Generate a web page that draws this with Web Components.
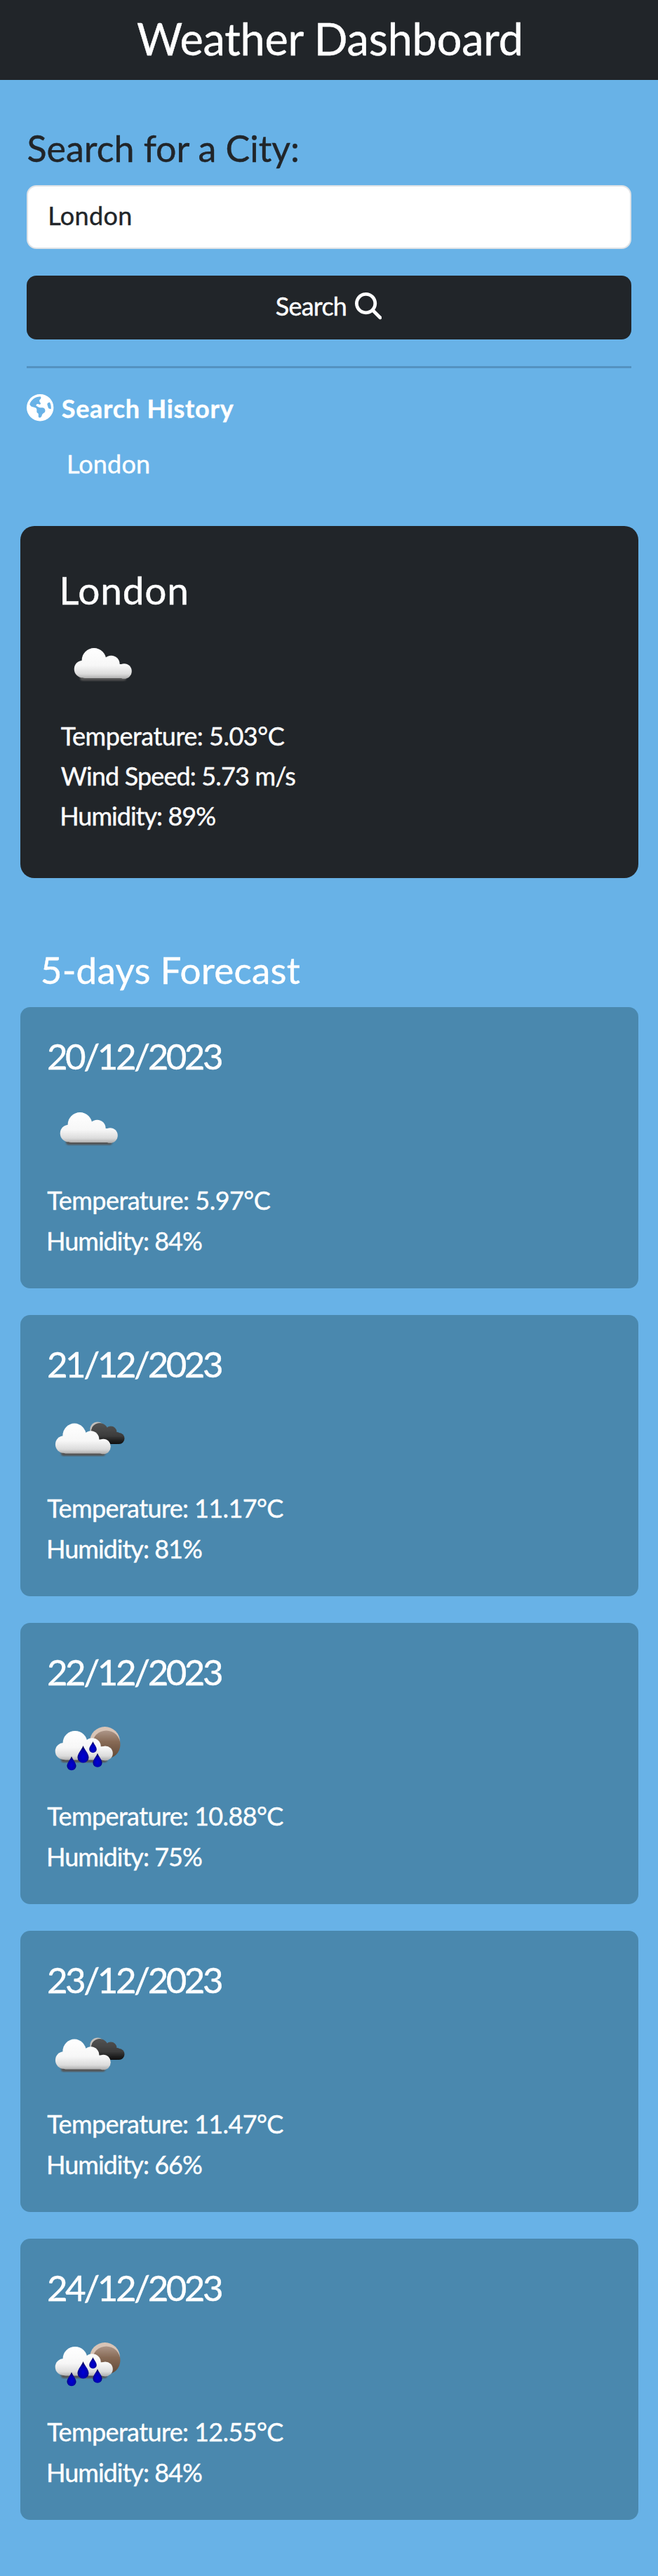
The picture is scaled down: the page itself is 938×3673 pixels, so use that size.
<!DOCTYPE html>
<html lang="en">
<head>
<meta charset="utf-8">
<title>Weather Dashboard</title>
<style>
body{margin:0;background:#68b2e7;color:#fff;font-family:Lato,"Open Sans",sans-serif}
</style>
</head>
<body>
<weather-app></weather-app>
<script>
// A single line of text, set on a given baseline and tracked to a given ink width.
class TextLine extends HTMLElement{
  connectedCallback(){
    if(this.shadowRoot)return;
    const n=k=>parseFloat(this.getAttribute(k))||0;
    const s=n('size'),bold=this.hasAttribute('bold');
    const text=this.textContent;
    const c=TextLine.ctx||(TextLine.ctx=document.createElement('canvas').getContext('2d'));
    c.font=`${bold?'bold ':''}${s}px Lato`;
    const m=c.measureText(text);
    const ink=m.actualBoundingBoxRight+m.actualBoundingBoxLeft;
    const ls=(n('w')-ink)/(text.length-1);
    this.attachShadow({mode:'open'}).innerHTML=`<style>
      :host{display:block;flex:none;white-space:nowrap;box-sizing:border-box;
        height:${n('h')}px;padding-left:${n('x')}px;
        font-size:${s}px;line-height:${2*(n('base')+.6-.387*s)}px;font-weight:${bold?700:400};
        -webkit-text-stroke:.4px currentColor}
      span{display:block;width:${n('w')}px;letter-spacing:${ls.toFixed(3)}px;text-indent:${m.actualBoundingBoxLeft.toFixed(2)}px;font-kerning:normal;font-variant-ligatures:none}
    </style><span><slot></slot></span>`;
  }
}

const cloud=(dx,dy,sx,sy)=>`<g transform="translate(${dx} ${dy}) scale(${sx} ${sy})">
  <rect x="27" y="74" width="66" height="9.5" rx="4" fill="#555" filter="url(#b)"/>
  <g fill="url(#w)" filter="url(#s)"><circle cx="31" cy="67" r="12.3"/><circle cx="47" cy="54.5" r="17.4"/><circle cx="71.5" cy="60" r="12.2"/><circle cx="90" cy="70" r="10.8"/><rect x="28" y="60" width="63" height="20" rx="6"/></g></g>`;
const drop=(x,y,k)=>`<path transform="translate(${x} ${y}) scale(${k})" d="M0-12C2-6 8-1 8 5A8 7.5 0 0 1-8 5C-8-1-2-6 0-12Z" fill="url(#d)" filter="url(#s)"/>`;
const defs=`<defs>
  <linearGradient id="w" gradientUnits="userSpaceOnUse" x1="0" y1="37" x2="0" y2="82"><stop offset="0" stop-color="#fff"/><stop offset=".55" stop-color="#f7f7f7"/><stop offset=".82" stop-color="#dcdcdc"/><stop offset="1" stop-color="#a2a2a2"/></linearGradient>
  <linearGradient id="k" gradientUnits="userSpaceOnUse" x1="0" y1="40" x2="0" y2="72"><stop offset="0" stop-color="#555"/><stop offset=".6" stop-color="#3c3c3c"/><stop offset="1" stop-color="#080808"/></linearGradient>
  <linearGradient id="m" x1="0" y1="0" x2="0" y2="1"><stop offset="0" stop-color="#ad9688"/><stop offset=".4" stop-color="#876a55"/><stop offset="1" stop-color="#5e4736"/></linearGradient>
  <radialGradient id="d" cx=".5" cy=".65" r=".6"><stop offset="0" stop-color="#0000d8"/><stop offset=".6" stop-color="#0000b0"/><stop offset="1" stop-color="#00004c"/></radialGradient>
  <filter id="b"><feGaussianBlur stdDeviation=".9"/></filter><filter id="s" x="-20%" y="-20%" width="140%" height="140%"><feGaussianBlur stdDeviation=".5"/></filter></defs>`;
const ART={
  cloud:cloud(0,0,1,1),
  broken:`<circle cx="72" cy="50" r="10.6" fill="#c4c0bc" filter="url(#s)"/>
    <g fill="url(#k)" filter="url(#s)"><circle cx="75" cy="53" r="12"/><circle cx="91" cy="54" r="8.5"/><circle cx="102.5" cy="63" r="8"/><rect x="68" y="54" width="37" height="17" rx="5"/></g>${cloud(-6,4.5,.96,1)}`,
  rain:`<circle cx="82.5" cy="56.5" r="21.5" fill="#d8c4b6" filter="url(#s)"/><circle cx="84.5" cy="60.5" r="20" fill="url(#m)" filter="url(#s)"/>${cloud(-7,5,1,.97)}
    ${drop(51.5,74,1)}${drop(65.5,64,.66)}${drop(72,82.5,.82)}${drop(35,87,.82)}`
};
class WeatherIcon extends HTMLElement{
  connectedCallback(){
    this.attachShadow({mode:'open'}).innerHTML=`<style>:host{display:block;width:120px;height:120px}svg{display:block}</style>
    <svg width="120" height="120" viewBox="0 0 120 120">${defs}${ART[this.getAttribute('kind')]}</svg>`;
  }
}

class ForecastCard extends HTMLElement{
  connectedCallback(){
    const a=k=>this.getAttribute(k);
    this.attachShadow({mode:'open'}).innerHTML=`<style>
      :host{display:block;box-sizing:border-box;height:401px;padding-left:38.3px;border-radius:14px;background:#4a88ae}</style>
      <text-line size="51" base="89" h="113.5" x="2" w="247">${a('date')}</text-line>
      <weather-icon kind="${a('kind')}"></weather-icon>
      <text-line size="36" base="56" h="57.7" x=".3" w="${a('tw')}">Temperature: ${a('temp')}°C</text-line>
      <text-line size="36" base="55.5" h="57.7" x="2" w="219">Humidity: ${a('hum')}%</text-line>`;
  }
}

class CurrentWeather extends HTMLElement{
  connectedCallback(){
    this.attachShadow({mode:'open'}).innerHTML=`<style>
      :host{display:block;box-sizing:border-box;height:502px;padding-left:58px;border-radius:20px;background:#212529}</style>
      <text-line size="55" base="112.3" h="137" x="2.5" w="177">London</text-line>
      <weather-icon kind="cloud"></weather-icon>
      <text-line size="36" base="55.5" h="57.7" w="319">Temperature: 5.03°C</text-line>
      <text-line size="36" base="55.2" h="57.7" w="334.5">Wind Speed: 5.73 m/s</text-line>
      <text-line size="36" base="55.2" h="57.7" x="1.5" w="219">Humidity: 89%</text-line>`;
  }
}

class SearchPanel extends HTMLElement{
  connectedCallback(){
    this.attachShadow({mode:'open'}).innerHTML=`<style>
      :host{display:block;height:636.5px;padding:0 38.3px}
      .title{color:#212529}
      .field,.btn{box-sizing:border-box;height:91px;border-radius:14px}
      .field{background:#fff;color:#212529;border:2.4px solid #dee2e6;padding-left:31px}
      .btn{background:#212529;margin-top:38.3px;display:flex;justify-content:center;gap:13px}
      .btn svg{margin-top:24px}
      .rule{height:2.4px;background:#5492c0;margin-top:38px}
      .hist{display:flex;gap:11px;margin-top:37.8px;height:38.5px}
      svg{display:block;fill:#fff;flex:none}
    </style>
    <text-line class="title" size="52" base="117" h="150.5" x="1.3" w="385.5">Search for a City:</text-line>
    <div class="field"><text-line size="36" base="55" h="86" w="115">London</text-line></div>
    <div class="btn"><text-line size="36" base="57" h="91" w="99">Search</text-line>
      <svg width="38.4" height="38.4" viewBox="0 0 512 512"><path d="M416 208c0 45.900-14.900 88.300-40 122.700L502.600 457.400c12.500 12.500 12.500 32.800 0 45.300s-32.800 12.500-45.300 0L330.700 376c-34.400 25.200-76.800 40-122.700 40C93.100 416 0 322.900 0 208S93.100 0 208 0S416 93.100 416 208zM208 352a144 144 0 1 0 0-288 144 144 0 1 0 0 288z"/></svg></div>
    <div class="rule"></div>
    <div class="hist">
      <svg width="38.4" height="38.4" viewBox="0 0 512 512"><path d="M57.700 193l9.400 16.400c8.300 14.500 21.900 25.200 38 29.800L163 255.700c17.200 4.900 29 20.600 29 38.500v39.900c0 11 6.200 21 16 25.900s16 14.900 16 25.900v39c0 15.600 14.900 26.900 29.900 22.600c16.100-4.600 28.600-17.500 32.700-33.800l2.800-11.200c4.200-16.900 15.200-31.400 30.300-40l8.100-4.600c15-8.500 24.200-24.500 24.200-41.700v-8.300c0-12.700-5.100-24.900-14.100-33.900l-3.900-3.900c-9-9-21.200-14.100-33.900-14.100H257c-11.100 0-22.100-2.900-31.800-8.400l-34.500-19.700c-4.300-2.500-7.600-6.500-9.200-11.200c-3.200-9.600 1.100-20 10.200-24.500l5.900-3c6.600-3.300 14.300-3.900 21.300-1.500l23.200 7.700c8.200 2.700 17.200-.4 21.900-7.500c4.700-7 4.200-16.300-1.200-22.800l-13.600-16.300c-10-12-9.900-29.500 .3-41.300l15.700-18.300c8.800-10.300 10.200-25 3.500-36.700l-2.400-4.200c-3.500-.2-6.900-.3-10.400-.3C163.100 48 84.400 108.900 57.700 193zM464 256c0-36.800-9.600-71.400-26.400-101.500L412 164.800c-15.700 6.300-23.800 23.800-18.500 39.800l16.900 50.700c3.500 10.400 12 18.300 22.600 20.900l29.100 7.300c1.200-9 1.800-18.200 1.800-27.500zM0 256a256 256 0 1 1 512 0A256 256 0 1 1 0 256z"/></svg>
      <text-line bold size="36" base="33.5" h="38.5" w="245">Search History</text-line></div>
    <text-line size="36" base="73.8" h="149" x="59.7" w="114">London</text-line>`;
  }
}

class AppHeader extends HTMLElement{
  connectedCallback(){
    this.attachShadow({mode:'open'}).innerHTML=`<style>:host{display:flex;justify-content:center;height:113.5px;background:#212529}</style>
    <text-line size="63" base="78.3" h="113.5" w="548">Weather Dashboard</text-line>`;
  }
}

class WeatherApp extends HTMLElement{
  connectedCallback(){
    const days=[['20/12/2023','cloud','5.97','84',318.5],['21/12/2023','broken','11.17','81',337],['22/12/2023','rain','10.88','75',337],['23/12/2023','broken','11.47','66',337],['24/12/2023','rain','12.55','84',337]];
    this.attachShadow({mode:'open'}).innerHTML=`<style>
      :host{display:block;height:3673px;overflow:hidden}
      main{padding:0 28px 0 28.7px}
      .days{display:grid;gap:38px}
    </style>
    <app-header></app-header>
    <search-panel></search-panel>
    <main>
      <current-weather></current-weather>
      <text-line size="53" base="150.5" h="183.5" x="31" w="368">5-days Forecast</text-line>
      <div class="days">${days.map(d=>`<forecast-card date="${d[0]}" kind="${d[1]}" temp="${d[2]}" hum="${d[3]}" tw="${d[4]}"></forecast-card>`).join('')}</div>
    </main>`;
  }
}
customElements.define('text-line',TextLine);
customElements.define('weather-icon',WeatherIcon);
customElements.define('forecast-card',ForecastCard);
customElements.define('current-weather',CurrentWeather);
customElements.define('search-panel',SearchPanel);
customElements.define('app-header',AppHeader);
customElements.define('weather-app',WeatherApp);
</script>
</body>
</html>
